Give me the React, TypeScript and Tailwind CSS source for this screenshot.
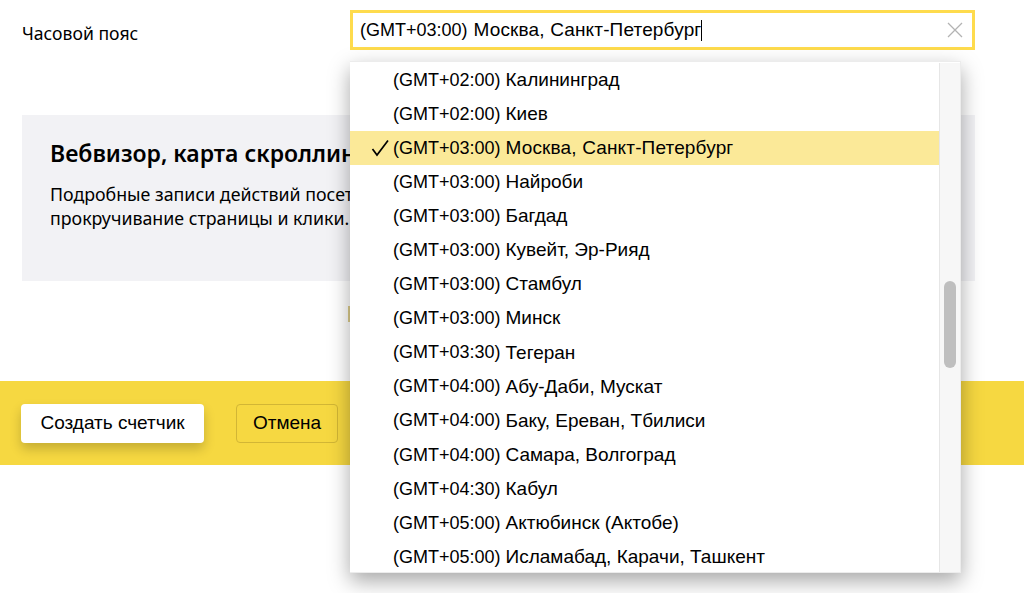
const items: [string, string, boolean?][] = [
  ["(GMT+02:00)", "Калининград"],
  ["(GMT+02:00)", "Киев"],
  ["(GMT+03:00)", "Москва, Санкт-Петербург", true],
  ["(GMT+03:00)", "Найроби"],
  ["(GMT+03:00)", "Багдад"],
  ["(GMT+03:00)", "Кувейт, Эр-Рияд"],
  ["(GMT+03:00)", "Стамбул"],
  ["(GMT+03:00)", "Минск"],
  ["(GMT+03:30)", "Тегеран"],
  ["(GMT+04:00)", "Абу-Даби, Мускат"],
  ["(GMT+04:00)", "Баку, Ереван, Тбилиси"],
  ["(GMT+04:00)", "Самара, Волгоград"],
  ["(GMT+04:30)", "Кабул"],
  ["(GMT+05:00)", "Актюбинск (Актобе)"],
  ["(GMT+05:00)", "Исламабад, Карачи, Ташкент"],
];

export default function App() {
  return (
    <div className="relative h-[593px] w-[1024px] overflow-hidden bg-white text-black font-['Noto_Sans',sans-serif]">
      <div className="flex h-[115px] items-start pl-[22px]">
        <div className="mt-[22px] w-[328px] text-[17.6px] leading-[22px]">Часовой пояс</div>
        <div className="mt-[10px] flex h-[40px] w-[625px] items-center justify-between border-[3px] border-[#fedb4d] pl-[7px] pr-[9px] font-['Liberation_Sans',sans-serif] text-[18px]">
          <span className="flex items-center gap-[6px] whitespace-nowrap">
            <span>(GMT+03:00)</span>
            <span className="flex items-center text-[19px] tracking-[0.15px]">
              Москва, Санкт-Петербург
              <span className="h-[21px] w-px bg-black" />
            </span>
          </span>
          <svg width="16" height="16" viewBox="0 0 16 16" fill="none" stroke="#b3b3b3" strokeWidth="1.3">
            <path d="M1 1 L15 15 M15 1 L1 15" />
          </svg>
        </div>
      </div>

      <div className="ml-[22px] h-[166px] w-[953px] bg-[#f2f2f5] pl-[28px] pt-[22px]">
        <div className="whitespace-nowrap text-[23px] font-semibold leading-[32px]">Вебвизор, карта скроллинга и аналитика форм</div>
        <div className="mt-[14px] whitespace-nowrap text-[17.8px] leading-[23.5px]">
          Подробные записи действий посетителей на сайте: движения мышью,
          <br />
          прокручивание страницы и клики.
        </div>
      </div>

      <div className="h-[100px] pl-[348px] pt-[25px]">
        <div className="h-[16px] w-[14px] bg-[#dccd8c]" />
      </div>

      <div className="flex h-[84px] items-center gap-[32px] bg-[#f6d841] pl-[21px] font-['Liberation_Sans',sans-serif] text-[19px]">
        <button className="h-[39px] w-[183px] rounded-[4px] bg-white shadow-[0_6px_12px_rgba(0,0,0,0.2)]">Создать счетчик</button>
        <button className="h-[39px] w-[102px] rounded-[4px] border border-[#d2b635]">Отмена</button>
      </div>

      <div className="absolute left-[350px] top-[61px] flex h-[512px] w-[611px] overflow-hidden border-y border-r border-[#ececec] bg-white pt-px shadow-[0_8px_20px_rgba(0,0,0,0.35)] font-['Liberation_Sans',sans-serif] text-[18px]">
        <div className="w-[589px]">
          {items.map(([gmt, city, sel]) => (
            <div key={gmt + city} className={`relative flex h-[34.1px] items-center gap-[5px] whitespace-nowrap pl-[43px] ${sel ? "bg-[#fbe998]" : ""}`}>
              {sel && (
                <svg className="absolute left-[21px] top-[8px]" width="18" height="18" viewBox="0 0 18 18" fill="none" stroke="#000" strokeWidth="1.7">
                  <path d="M1.5 10 L6 16 L17 1.5" />
                </svg>
              )}
              <span>{gmt}</span>
              <span className={sel ? "text-[19px] tracking-[0.15px]" : "text-[19px]"}>{city}</span>
            </div>
          ))}
        </div>
        <div className="relative flex-1 border-l border-[#e6e6e6] bg-[#f7f7f7]">
          <div className="absolute left-[4px] top-[218px] h-[87px] w-[12px] rounded-full bg-[#bfbfbf]" />
        </div>
      </div>
    </div>
  );
}
